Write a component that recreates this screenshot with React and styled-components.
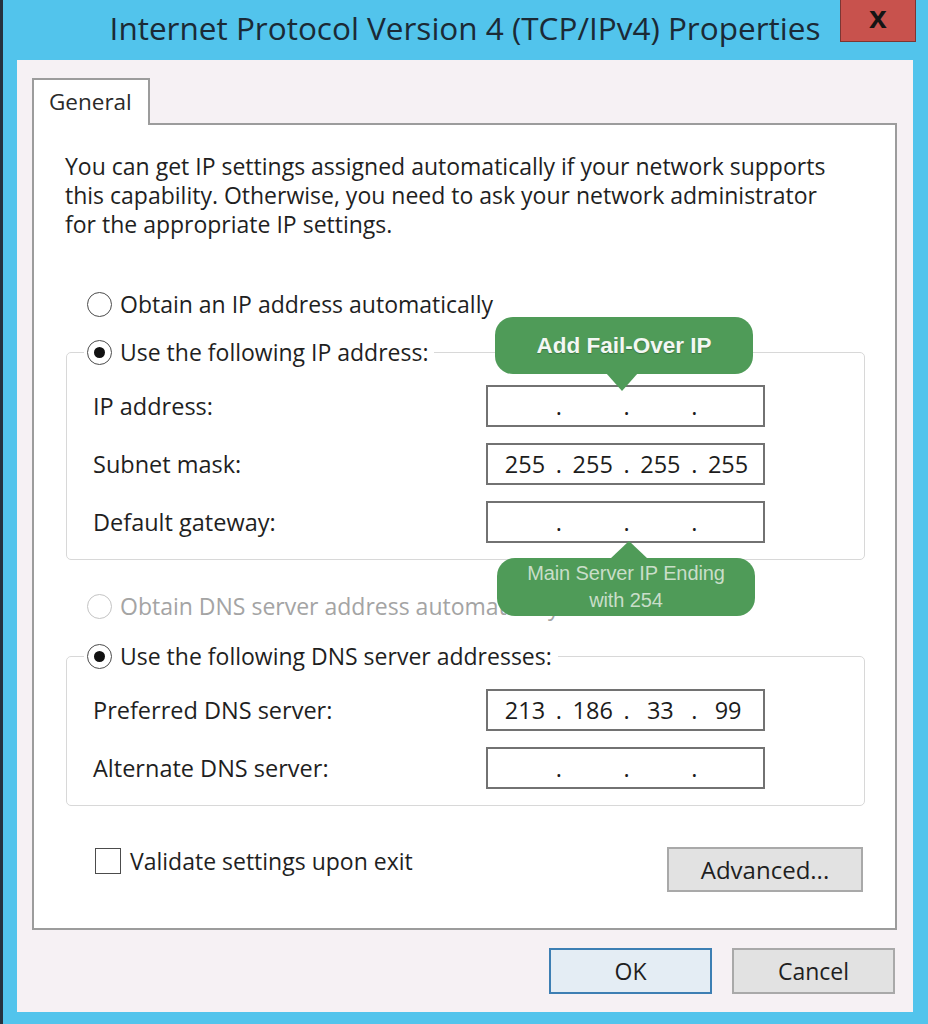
import React from 'react';
import styled, { createGlobalStyle, css } from 'styled-components';

const GlobalStyle = createGlobalStyle`
	html,
	body {
		margin: 0;
		padding: 0;
		background: #52c4ec;
	}
	body {
		font-family: 'Open Sans', 'Noto Sans', sans-serif;
		color: #1e1e1e;
	}
	* {
		box-sizing: border-box;
	}
`;

const UI_FONT = `'Open Sans', 'Noto Sans', sans-serif`;
const CALLOUT_GREEN = '#4f9b58';

const ipGroup = {
	legend: 'Use the following IP address:',
	rows: [
		{ label: 'IP address:', value: ['', '', '', ''], callout: 'above' },
		{ label: 'Subnet mask:', value: ['255', '255', '255', '255'] },
		{ label: 'Default gateway:', value: ['', '', '', ''], callout: 'below' },
	],
};

const dnsGroup = {
	legend: 'Use the following DNS server addresses:',
	rows: [
		{ label: 'Preferred DNS server:', value: ['213', '186', '33', '99'] },
		{ label: 'Alternate DNS server:', value: ['', '', '', ''] },
	],
};

const Radio = ({ checked, disabled }) => (
	<RadioCircle disabled={disabled}>{checked && <RadioDot />}</RadioCircle>
);

const IpField = ({ value, callout }) => (
	<IpBox>
		{value.map((octet, i) => (
			<React.Fragment key={i}>
				{i > 0 && <IpDot>.</IpDot>}
				<Octet>{octet}</Octet>
			</React.Fragment>
		))}
		{callout === 'above' && (
			<Callout placement="above">
				<CalloutTitle>Add Fail-Over IP</CalloutTitle>
			</Callout>
		)}
		{callout === 'below' && (
			<Callout placement="below">
				<CalloutNote>
					<span>Main Server IP Ending</span>
					<span>with 254</span>
				</CalloutNote>
			</Callout>
		)}
	</IpBox>
);

const AddressGroup = ({ group, topGap }) => (
	<Group topGap={topGap}>
		<Legend>
			<Radio checked />
			<span>{group.legend}</span>
		</Legend>
		<GroupBody>
			{group.rows.map((row) => (
				<FieldRow key={row.label}>
					<FieldLabel>{row.label}</FieldLabel>
					<IpField value={row.value} callout={row.callout} />
				</FieldRow>
			))}
		</GroupBody>
	</Group>
);

const App = () => (
	<Window>
		<GlobalStyle />
		<TitleBar>
			<span />
			<Title>Internet Protocol Version 4 (TCP/IPv4) Properties</Title>
			<CloseButton>x</CloseButton>
		</TitleBar>
		<Client>
			<TabStrip>
				<Tab>General</Tab>
			</TabStrip>
			<Panel>
				<Intro>
					You can get IP settings assigned automatically if your network supports
					<br />
					this capability. Otherwise, you need to ask your network administrator
					<br />
					for the appropriate IP settings.
				</Intro>
				<RadioRow topGap={50}>
					<Radio />
					<span>Obtain an IP address automatically</span>
				</RadioRow>
				<AddressGroup group={ipGroup} topGap={18} />
				<RadioRow topGap={31} disabled>
					<Radio disabled />
					<span>Obtain DNS server address automatically</span>
				</RadioRow>
				<AddressGroup group={dnsGroup} topGap={20} />
				<BottomRow>
					<CheckRow>
						<CheckBox />
						<span>Validate settings upon exit</span>
					</CheckRow>
					<Button wide>Advanced...</Button>
				</BottomRow>
			</Panel>
			<Footer>
				<Button primary>OK</Button>
				<Button>Cancel</Button>
			</Footer>
		</Client>
	</Window>
);

export default App;

// Window chrome

const Window = styled.div`
	width: 928px;
	height: 1024px;
	display: flex;
	flex-direction: column;
	background: #52c4ec;
	border-left: 3px solid #26323e;
	padding: 0 15px 12px 14px;
	overflow: hidden;
`;

const TitleBar = styled.header`
	height: 60px;
	display: grid;
	grid-template-columns: 1fr auto 1fr;
	align-items: start;
`;

const Title = styled.h1`
	margin: 8px 0 0;
	font-family: ${UI_FONT};
	font-weight: 400;
	font-size: 31.5px;
	line-height: 40px;
	color: #1b2a36;
	white-space: nowrap;
`;

const CloseButton = styled.div`
	justify-self: end;
	margin-right: -3px;
	width: 76px;
	height: 42px;
	background: #c8524d;
	border: 1px solid #7c3633;
	border-top: 0;
	font-family: 'Liberation Sans', Arial, sans-serif;
	font-weight: 700;
	font-size: 32px;
	line-height: 34px;
	text-align: center;
	color: #141414;
`;

const Client = styled.div`
	flex: 1;
	display: flex;
	flex-direction: column;
	background: #f6f1f4;
	padding: 18px 16px 18px 15px;
`;

const TabStrip = styled.div`
	display: flex;
`;

const Tab = styled.div`
	width: 118px;
	height: 47px;
	margin-bottom: -2px;
	position: relative;
	z-index: 1;
	background: #fff;
	border: 2px solid #9c9c9c;
	border-bottom: 0;
	padding-left: 15px;
	font-size: 22.5px;
	line-height: 44px;
	color: #2a2a2a;
`;

const Panel = styled.section`
	flex: 1;
	background: #fff;
	border: 2px solid #9c9c9c;
	padding: 27px 30px 0 32px;
	font-size: 23px;
	color: #1f1f1f;
`;

const Intro = styled.p`
	margin: 0 0 0 -1px;
	line-height: 29px;
	white-space: nowrap;
`;

// Radios and group boxes

const RadioRow = styled.div`
	display: flex;
	align-items: center;
	gap: 8px;
	height: 30px;
	margin-top: ${(p) => p.topGap}px;
	padding-left: 21px;
	white-space: nowrap;
	color: ${(p) => (p.disabled ? '#a4a4a4' : 'inherit')};
`;

const RadioCircle = styled.span`
	flex: none;
	width: 25px;
	height: 25px;
	border-radius: 50%;
	border: 1.5px solid ${(p) => (p.disabled ? '#c4c4c4' : '#4c4c4c')};
	background: #fff;
	display: flex;
	align-items: center;
	justify-content: center;
`;

const RadioDot = styled.span`
	width: 11px;
	height: 11px;
	border-radius: 50%;
	background: #111;
`;

const Group = styled.fieldset`
	margin: ${(p) => p.topGap}px 0 0;
	padding: 0;
	min-width: 0;
	border: 1px solid #d8d8d8;
	border-radius: 5px;
`;

const Legend = styled.legend`
	display: flex;
	align-items: center;
	gap: 8px;
	height: 30px;
	margin-left: 17px;
	padding: 0 6px 0 3px;
	white-space: nowrap;
`;

const GroupBody = styled.div`
	display: flex;
	flex-direction: column;
	gap: 16px;
	padding: 18px 99px 16px 26px;
`;

const FieldRow = styled.div`
	display: flex;
	align-items: center;
	justify-content: space-between;
	height: 42px;
`;

const FieldLabel = styled.span`
	white-space: nowrap;
	font-size: 23.5px;
`;

const IpBox = styled.div`
	position: relative;
	width: 279px;
	height: 42px;
	display: flex;
	align-items: center;
	padding-left: 12px;
	border: 2px solid #727272;
	background: #fff;
	font-size: 23.5px;
	color: #1c1c1c;
`;

const Octet = styled.span`
	width: 50px;
	text-align: center;
`;

const IpDot = styled.span`
	width: 17.7px;
	text-align: center;
`;

// Green callouts over the dialog

const Callout = styled.div`
	position: absolute;
	z-index: 3;
	width: 258px;
	display: flex;
	align-items: center;
	justify-content: center;
	background: ${CALLOUT_GREEN};
	border-radius: 18px;
	&::after {
		content: '';
		position: absolute;
		width: 0;
		height: 0;
	}
	${(p) =>
		p.placement === 'above'
			? css`
					left: 7px;
					bottom: calc(100% + 13px);
					height: 57px;
					&::after {
						left: 111px;
						bottom: -17px;
						border-left: 16px solid transparent;
						border-right: 16px solid transparent;
						border-top: 18px solid ${CALLOUT_GREEN};
					}
			  `
			: css`
					left: 9px;
					top: calc(100% + 17px);
					height: 58px;
					&::after {
						left: 113px;
						top: -17px;
						border-left: 19px solid transparent;
						border-right: 19px solid transparent;
						border-bottom: 18px solid ${CALLOUT_GREEN};
					}
			  `}
`;

const CalloutTitle = styled.span`
	font-family: 'Liberation Sans', Arial, sans-serif;
	font-weight: 700;
	font-size: 22.5px;
	color: #f3f7f3;
	text-shadow: 0 1px 1px rgba(0, 0, 0, 0.25);
	white-space: nowrap;
`;

const CalloutNote = styled.span`
	display: flex;
	flex-direction: column;
	align-items: center;
	font-family: 'Liberation Sans', Arial, sans-serif;
	font-size: 20px;
	line-height: 27px;
	letter-spacing: -0.1px;
	color: #c9dec9;
	white-space: nowrap;
`;

// Bottom of the page

const BottomRow = styled.div`
	display: flex;
	justify-content: space-between;
	align-items: flex-start;
	margin-top: 41px;
	padding: 0 2px 0 29px;
`;

const CheckRow = styled.label`
	display: flex;
	align-items: center;
	gap: 9px;
	height: 28px;
	white-space: nowrap;
`;

const CheckBox = styled.span`
	width: 26px;
	height: 26px;
	border: 1.5px solid #4c4c4c;
	background: #fff;
`;

const Button = styled.div`
	width: ${(p) => (p.wide ? 196 : 163)}px;
	height: ${(p) => (p.wide ? 45 : 46)}px;
	display: flex;
	align-items: center;
	justify-content: center;
	font-size: ${(p) => (p.wide ? 24 : 23)}px;
	color: #1f1f1f;
	background: ${(p) => (p.primary ? '#e4edf4' : '#e2e2e2')};
	border: 2px solid ${(p) => (p.primary ? '#3d7fb3' : '#a9a9a9')};
`;

const Footer = styled.footer`
	display: flex;
	justify-content: flex-end;
	gap: 20px;
	margin-top: 18px;
	padding-right: 2px;
`;
